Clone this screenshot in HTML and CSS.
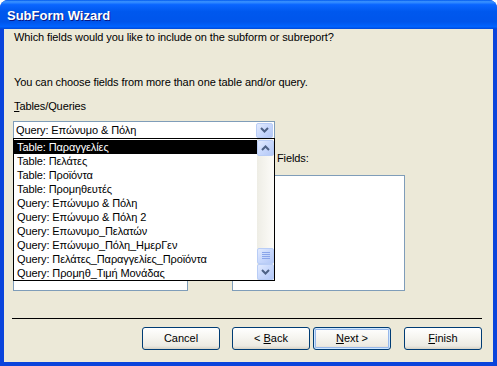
FILE: index.html
```html
<!DOCTYPE html>
<html lang="el">
<head>
    <meta charset="UTF-8">
    <title>SubForm Wizard</title>
    <link rel="stylesheet" href="styles.css">
</head>
<body>
    <div class="window">
        <div class="titlebar">
            <span class="title">SubForm Wizard</span>
        </div>
        <div class="client">
            <p class="prompt">Which fields would you like to include on the subform or subreport?</p>
            <p class="hint">You can choose fields from more than one table and/or query.</p>
            <div class="caption"><u>T</u>ables/Queries</div>
            <div class="combo">
                <span class="combo-text">Query: Επώνυμο &amp; Πόλη</span>
                <span class="xp-btn combo-btn">
                    <svg width="9" height="6" viewBox="0 0 9 6"><polyline points="1,1 4.5,4.5 8,1" fill="none" stroke="#4d6185" stroke-width="2"/></svg>
                </span>
            </div>
            <div class="lists">
                <div class="list-col left">
                    <div class="caption hidden">Available Fields:</div>
                    <div class="listbox"></div>
                </div>
                <div class="list-col right">
                    <div class="caption">Selected Fields:</div>
                    <div class="listbox"></div>
                </div>
            </div>
            <div class="separator"></div>
            <div class="buttons">
                <button class="btn cancel">Cancel</button>
                <button class="btn">&lt; <u>B</u>ack</button>
                <button class="btn default"><u>N</u>ext &gt;</button>
                <button class="btn finish"><u>F</u>inish</button>
            </div>

            <div class="dropdown">
                <ul class="items">
                    <li class="selected">Table: Παραγγελίες</li>
                    <li>Table: Πελάτες</li>
                    <li>Table: Προϊόντα</li>
                    <li>Table: Προμηθευτές</li>
                    <li>Query: Επώνυμο &amp; Πόλη</li>
                    <li>Query: Επώνυμο &amp; Πόλη 2</li>
                    <li>Query: Επωνυμο_Πελατών</li>
                    <li>Query: Επώνυμο_Πόλη_ΗμερΓεν</li>
                    <li>Query: Πελάτες_Παραγγελίες_Προϊόντα</li>
                    <li>Query: Προμηθ_Τιμή Μονάδας</li>
                </ul>
                <div class="scrollbar">
                    <span class="xp-btn sb-btn">
                        <svg width="9" height="6" viewBox="0 0 9 6"><polyline points="1,5 4.5,1.5 8,5" fill="none" stroke="#4d6185" stroke-width="2"/></svg>
                    </span>
                    <span class="track"></span>
                    <span class="xp-btn thumb">
                        <svg width="8" height="8" viewBox="0 0 8 8"><path d="M0 0.5h8M0 2.5h8M0 4.5h8M0 6.5h8" stroke="#8aa5ea" stroke-width="1"/></svg>
                    </span>
                    <span class="xp-btn sb-btn">
                        <svg width="9" height="6" viewBox="0 0 9 6"><polyline points="1,1 4.5,4.5 8,1" fill="none" stroke="#4d6185" stroke-width="2"/></svg>
                    </span>
                </div>
            </div>
        </div>
    </div>
</body>
</html>
```

FILE: styles.css
```css
body {
    margin: 0;
    font-family: "Liberation Sans", Arial, sans-serif;
    font-size: 11px;
    line-height: 13px;
    letter-spacing: -0.1px;
    color: #000;
}
.window {
    width: 497px;
    height: 366px;
    display: flex;
    flex-direction: column;
    background: #0a44dc;
    border-radius: 8px 8px 0 0;
    overflow: hidden;
}
.titlebar {
    height: 29px;
    flex: none;
    background: linear-gradient(#0058ee 0%, #3d95ff 6%, #0a66ff 16%, #0058ee 40%, #0055eb 75%, #0063ff 92%, #0048d8 100%);
    display: flex;
    align-items: center;
    padding-left: 7px;
}
.title {
    font-weight: bold;
    font-size: 13px;
    letter-spacing: 0;
    color: #fff;
    text-shadow: 1px 1px 0 #0a1883;
    margin-top: 1px;
}
.client {
    position: relative;
    flex: 1;
    margin: 0 4px 4px 4px;
    background: #ece9d8;
    padding: 0 9px;
}
.prompt, .hint {
    margin: 0;
    padding-left: 1px;
}
.prompt {
    padding-top: 2px;
}
.hint {
    margin-top: 32px;
}
.caption {
    padding-left: 1px;
    white-space: nowrap;
}
.caption.hidden {
    visibility: hidden;
}
.client > .caption {
    margin-top: 11px;
}
.combo {
    margin-top: 8px;
    width: 262px;
    height: 18px;
    box-sizing: border-box;
    border: 1px solid #7f9db9;
    background: #fff;
    display: flex;
    align-items: center;
    justify-content: space-between;
    padding: 1px;
}
.combo-text {
    padding-left: 1px;
}
.xp-btn {
    display: flex;
    align-items: center;
    justify-content: center;
    box-sizing: border-box;
    border: 1px solid #b9cdf6;
    border-radius: 2px;
    background: linear-gradient(135deg, #e3ebfe 0%, #c8d8fc 50%, #b3c7f6 100%);
}
.combo-btn {
    width: 17px;
    height: 15px;
}
.lists {
    display: flex;
    margin-top: 13px;
}
.list-col .listbox {
    margin-top: 10px;
    height: 116px;
    box-sizing: border-box;
    border: 1px solid #7f9db9;
    background: #fff;
}
.left .listbox {
    width: 175px;
}
.right {
    margin-left: 44px;
}
.right .caption {
    margin-left: -1px;
}
.right .listbox {
    width: 173px;
}
.separator {
    margin-top: 27px;
    width: 470px;
    height: 1px;
    margin-left: -1px;
    background: #000;
}
.buttons {
    display: flex;
    margin-top: 8px;
    padding-left: 129px;
}
.btn {
    width: 78px;
    height: 23px;
    margin: 0;
    padding: 0;
    font: inherit;
    color: #000;
    border: 1px solid #003c74;
    border-radius: 3px;
    background: linear-gradient(#ffffff 0%, #f6f5f0 45%, #eceae2 85%, #d6d2c6 100%);
}
.btn + .btn {
    margin-left: 12px;
}
.btn.default {
    margin-left: 3px;
    box-shadow: inset 0 0 0 1px #cee7ff, inset 0 0 0 2px #98b8ea;
}
.btn.finish {
    margin-left: 13px;
}
.dropdown {
    position: absolute;
    left: 9px;
    top: 109px;
    width: 262px;
    height: 143px;
    box-sizing: border-box;
    border: 1px solid #000;
    background: #fff;
    display: flex;
    padding-top: 1px;
}
.items {
    list-style: none;
    margin: 0;
    padding: 0;
    flex: 1;
}
.items li {
    height: 14px;
    line-height: 14px;
    padding-left: 3px;
    white-space: nowrap;
}
.items li.selected {
    background: #000;
    color: #fff;
}
.scrollbar {
    width: 17px;
    display: flex;
    flex-direction: column;
    background: linear-gradient(to right, #eeede5, #fdfcf9);
    margin-top: -1px;
    padding-top: 1px;
}
.sb-btn, .thumb {
    width: 17px;
    height: 16px;
}
.track {
    flex: 1;
}
```
